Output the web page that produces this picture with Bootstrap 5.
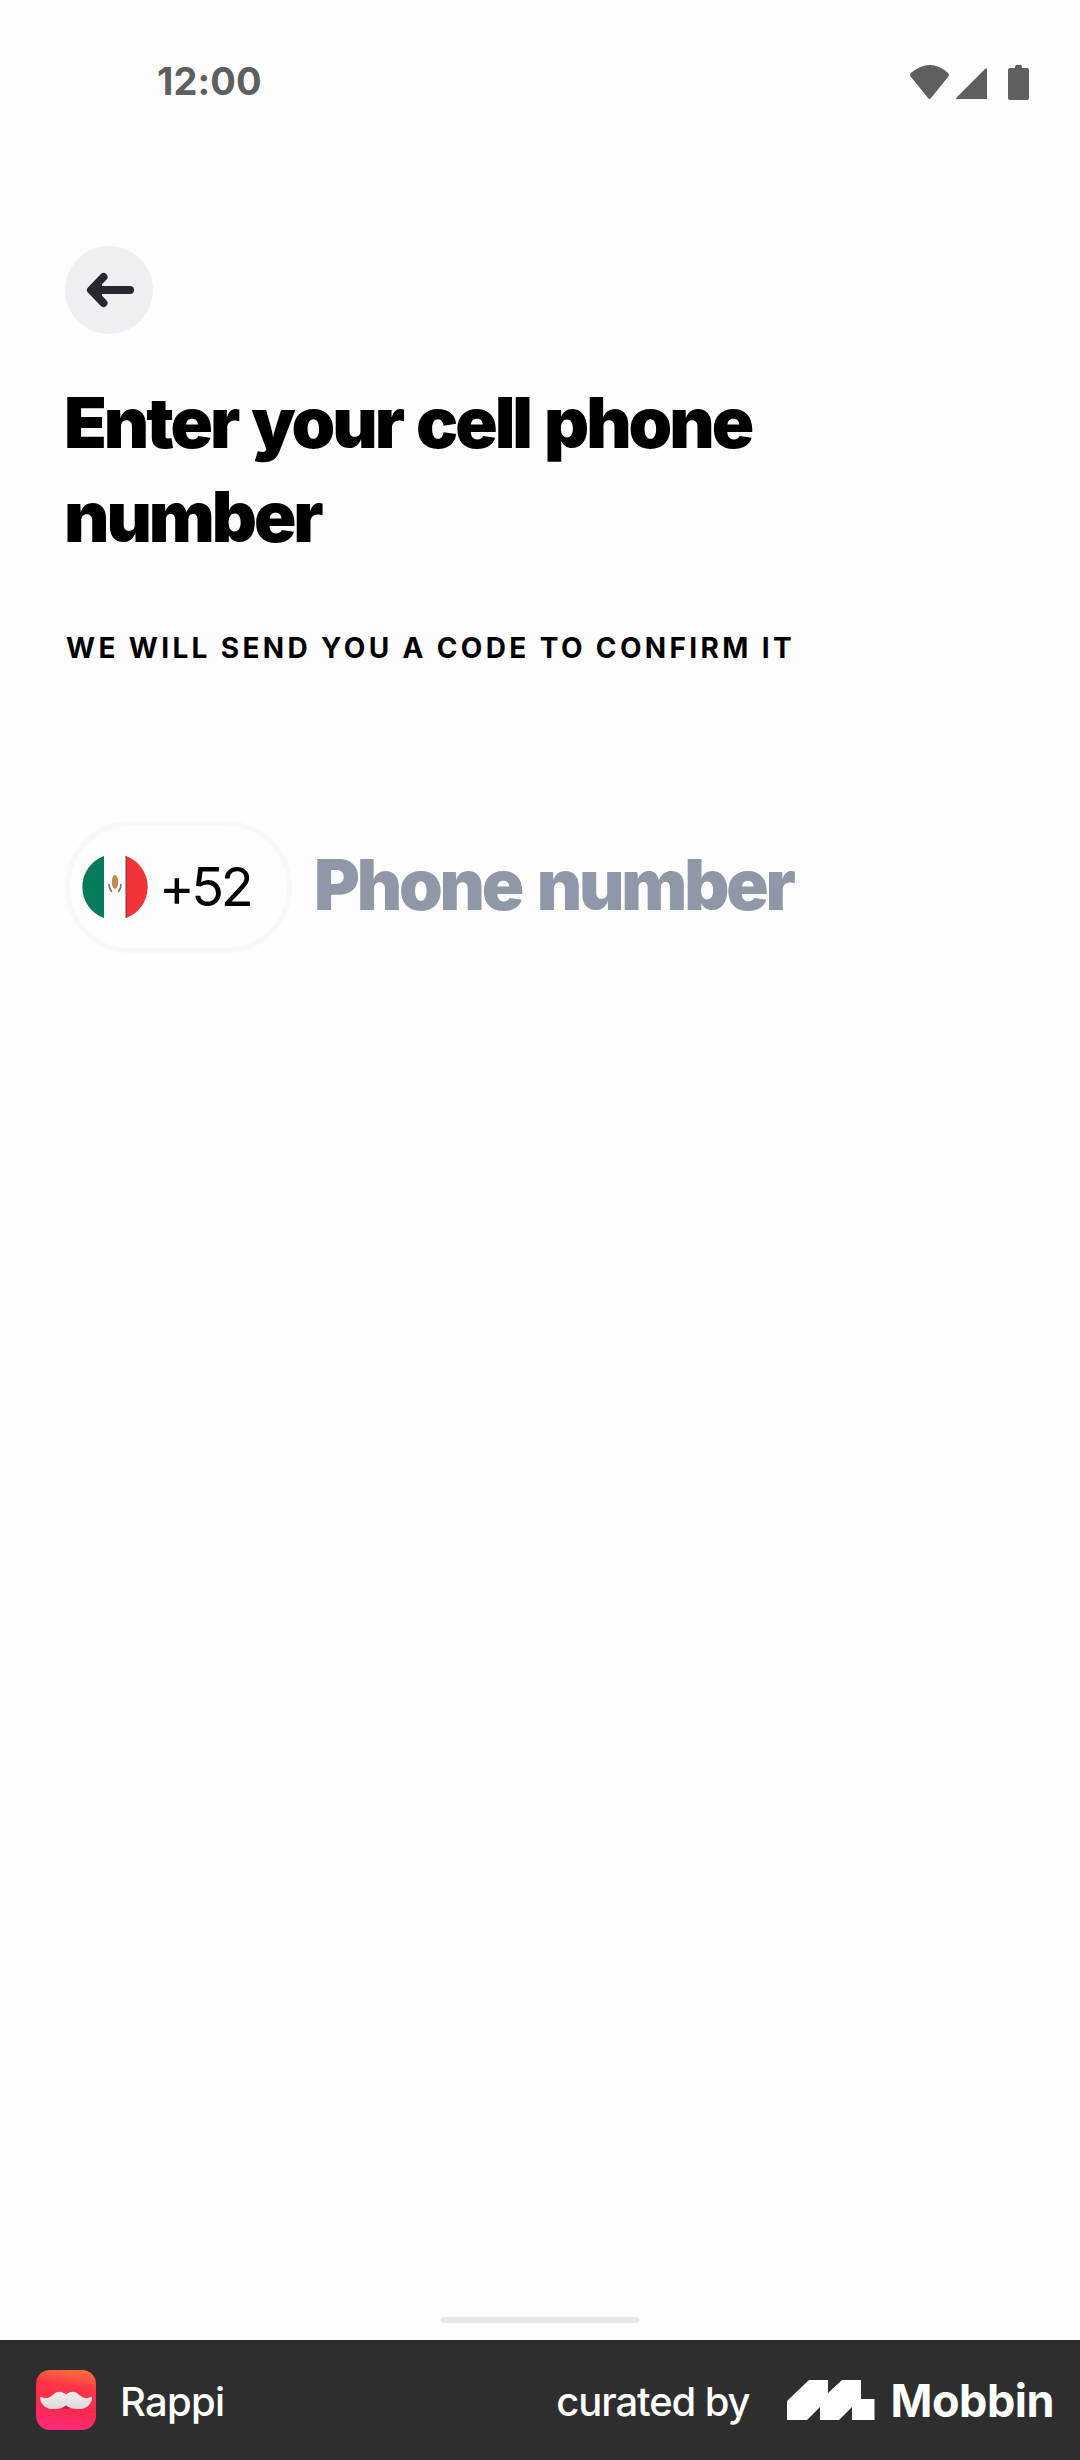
<!DOCTYPE html>
<html lang="en">
<head>
<meta charset="utf-8">
<meta name="viewport" content="width=device-width, initial-scale=1">
<title>Rappi – phone number</title>
<link href="https://cdn.jsdelivr.net/npm/bootstrap@5.3.0/dist/css/bootstrap.min.css" rel="stylesheet">
<style>
body{background:#fdfdfd;font-family:Inter,"Liberation Sans",sans-serif;color:#000}
.screen{height:2460px;overflow:hidden;line-height:1}
.status-row{padding:62px 51px 0 157px;height:104px;color:#5f5f5f}
.clock{font-size:38px;font-weight:700;letter-spacing:.1px}
.status-icons{margin-top:3px}
.page-body{padding:142px 65px 0}
.back-btn{width:88px;height:88px;background:#eeeff3;border:0}
.headline{font-size:70px;font-weight:900;line-height:94px;letter-spacing:-3.05px;word-spacing:3.2px;margin:42px 0 0 -1px}
.hint{font-size:28px;font-weight:700;letter-spacing:3.36px;line-height:34px;margin:67px 0 0 1px}
.phone-row{margin-top:156px}
.code-pill{width:227px;height:132px;border:5px solid #f8f8f9;padding-left:12px;gap:11px}
.code{font-size:54px;font-weight:400;letter-spacing:-3.4px}
.number-field{font-size:70px;font-weight:900;color:#9097a6;letter-spacing:-3.2px;word-spacing:5px;margin:-5px 0 0 22px}
.home-bar{width:198px;height:6px;background:#e8e8e8;margin-bottom:17px}
.foot{height:120px;background:#2e2e2e;padding:0 26px 0 36px;font-size:40px;font-weight:500}
.foot span{padding-top:3px}
.app-name{margin-left:24px;letter-spacing:-.7px}
.credit{letter-spacing:-1.1px}
.mob-logo{margin:0 16px 0 37px}
.foot .brand{font-size:45px;font-weight:700;letter-spacing:-.5px;padding-top:1px}
</style>
<script src="https://cdn.jsdelivr.net/npm/bootstrap@5.3.0/dist/js/bootstrap.bundle.min.js"></script>
</head>
<body>
<div class="screen d-flex flex-column">
  <header class="status-row d-flex justify-content-between align-items-start flex-shrink-0">
    <span class="clock">12:00</span>
    <svg class="status-icons" width="119" height="36" viewBox="0 0 119 36" fill="currentColor" aria-hidden="true">
      <path d="M1 8Q-1 10 1 12L18 33Q19.5 35 21 33L38 12Q40 10 38 8Q20-8 1 8Z"/>
      <path d="M75 4Q77 2 77 5V34H47Q45 34 47 32Z"/>
      <path d="M106 0H111Q112 0 112 3H117Q119 3 119 5V33Q119 35 117 35H100Q98 35 98 33V5Q98 3 100 3H105Q105 0 106 0Z"/>
    </svg>
  </header>
  <main class="page-body flex-grow-1">
    <button class="back-btn rounded-circle d-flex align-items-center justify-content-center p-0" aria-label="Back">
      <svg width="50" height="36" viewBox="0 0 50 36" aria-hidden="true"><path d="M46 18H9M19.500 5L7 18L19.500 31" fill="none" stroke="#28272f" stroke-width="8" stroke-linecap="round" stroke-linejoin="round"/><path d="M7 18L18 7V29Z" fill="#28272f"/></svg>
    </button>
    <h1 class="headline">Enter your cell phone<br>number</h1>
    <p class="hint">WE WILL SEND YOU A CODE TO CONFIRM IT</p>
    <div class="phone-row d-flex align-items-center">
      <div class="code-pill rounded-pill d-flex align-items-center">
        <svg width="66" height="66" viewBox="0 0 66 66" aria-hidden="true">
          <path d="M22 2A33 33 0 0 0 22 64Z" fill="#087b5b"/>
          <path d="M44 2A33 33 0 0 1 44 64Z" fill="#f13439"/>
          <path d="M44 2V64" stroke="#7d3035" stroke-width="1"/>
          <ellipse cx="33" cy="28" rx="3.2" ry="7" fill="#c08a55"/>
          <path d="M27 30Q27 35 30 38M39 30Q39 35 36 38" fill="none" stroke="#76786a" stroke-width="1.5"/>
        </svg>
        <span class="code">+52</span>
      </div>
      <span class="number-field">Phone number</span>
    </div>
  </main>
  <div class="home-bar rounded-pill mx-auto flex-shrink-0"></div>
  <footer class="foot d-flex align-items-center text-white flex-shrink-0">
    <svg width="60" height="60" viewBox="0 0 60 60" aria-hidden="true">
      <defs>
        <linearGradient id="appBase" x1=".35" y1="1" x2=".5" y2="0"><stop offset="0" stop-color="#ff2a80"/><stop offset=".35" stop-color="#ff2850"/><stop offset=".75" stop-color="#ff3545"/><stop offset="1" stop-color="#ff6a3c"/></linearGradient>
        <linearGradient id="hair" x1="0" y1="0" x2="0" y2="1"><stop offset="0" stop-color="#f2efef"/><stop offset="1" stop-color="#dcd8da"/></linearGradient>
      </defs>
      <rect width="60" height="60" rx="14" fill="url(#appBase)"/>
      <path d="M24 37Q30 33 36 37Q30 41 24 37Z" fill="#c31c3c"/>
      <path d="M30 24.500C26 21 21 21 18 24C14 28 9 29 6.500 27.500C5.500 26.500 4 26.500 4 28.500C5 36 12 39.500 18 39C23 39 27 38 30 35.500C33 38 37 39 42 39C48 39.500 55 36 56 28.500C56 26.500 54.500 26.500 53.500 27.500C51 29 46 28 42 24C39 21 34 21 30 24.500Z" fill="url(#hair)"/>
    </svg>
    <span class="app-name">Rappi</span>
    <span class="credit ms-auto">curated by</span>
    <svg class="mob-logo" width="88" height="40" viewBox="0 0 88 40" fill="#fff" aria-hidden="true"><path d="M0 21L22 0H41V13L55 0H74V19H87.500V40H65V27L52 40H33V27L20 40H0Z"/></svg>
    <span class="brand">Mobbin</span>
  </footer>
</div>
</body>
</html>
